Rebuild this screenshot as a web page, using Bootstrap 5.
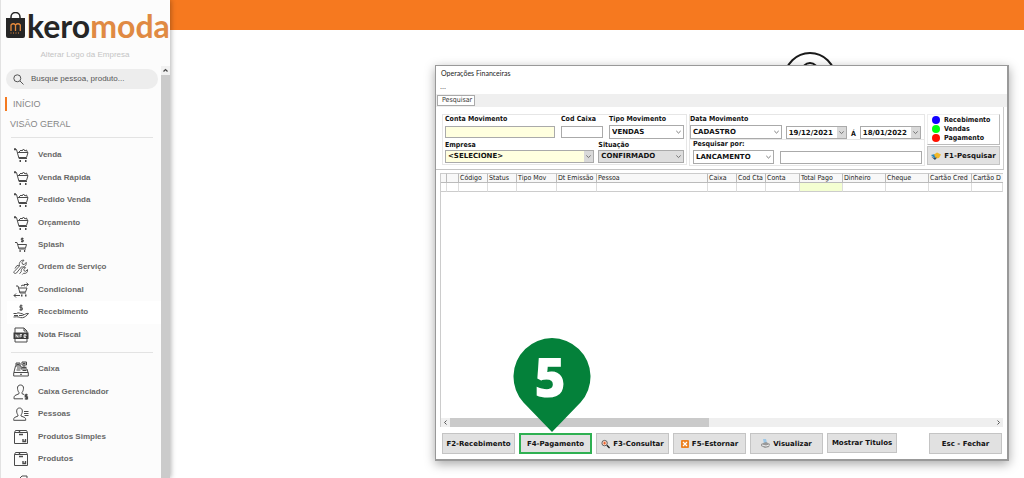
<!DOCTYPE html>
<html lang="pt-BR">
<head>
<meta charset="utf-8">
<meta name="viewport" content="width=device-width, initial-scale=1">
<title>Keromoda - Operações Financeiras</title>
<link href="https://cdn.jsdelivr.net/npm/bootstrap@5.3.0/dist/css/bootstrap.min.css" rel="stylesheet">
<style>
  body { font-family: "Liberation Sans", Arial, sans-serif; font-size: 8px; line-height: 10px; background: #fff; }
  svg { display: block; flex: none; }
  /* sidebar */
  .side { width: 170px; background: #fcfcfc; border-left: 1px solid #e2e2e2; box-shadow: 1px 0 5px rgba(0,0,0,.3); z-index: 2; }
  .brand-row { height: 29px; margin-top: 11px; padding-left: 4px; color: #262626; font: 700 32px/29px Lato, sans-serif; text-decoration: none; }
  .brand-row b { color: #e08a43; font-weight: 700; }
  .logo-hint { color: #c4c4c4; margin-top: 10px; font-size: 8px; }
  .search-pill { background: #ededed; border-radius: 10px; height: 20px; margin: 9px 3px 0 5px; padding: 0 7px; gap: 7px; }
  .search-pill input { border: 0; background: none; outline: 0; padding: 0; width: 100%; font-size: 8px; }
  .search-pill input::placeholder { color: #555; opacity: 1; }
  .top-link { color: #868686; font-size: 9px; line-height: 14px; text-decoration: none; display: block; padding-left: 9px; }
  .top-link.current { border-left: 2px solid #f47a20; margin-left: 4px; padding-left: 6px; }
  .rule { height: 1px; background: #e3e3e3; margin: 0 8px 0 10px; }
  .menu-group a { flex: 1; gap: 9px; padding-left: 6px; margin-left: 6px; color: #686868; font-weight: 700; text-decoration: none; }
  .menu-group a.selected { background: #fff; }
  .ico { width: 16px; height: 16px; fill: none; stroke: #4a4a4a; stroke-width: 1; }
  .vbar { width: 9px; margin-top: 66px; background: #cbcbcb; }
  .vbar span { height: 9px; background: #f1f1f1; }
  /* main */
  .topbar { height: 30px; background: #f6791f; }
  .person { position: absolute; top: 52px; right: 188px; }
  .win { width: 67.2%; min-width: 574px; margin: 35px 15px 0 auto; background: #fff; border: 1px solid #999; border-right-width: 2px; border-bottom-width: 2px;
    box-shadow: 0 3px 10px rgba(0,0,0,.35); font-family: "DejaVu Sans Condensed", "DejaVu Sans", sans-serif; font-size: 7px; line-height: 9px; color: #222; position: relative; }
  .win-title { font-family: Lato, "Open Sans", sans-serif; padding: 2px 5px 0; line-height: 10px; height: 18px; }
  .win-menu { padding: 0 4px; height: 10px; line-height: 7px; }
  .tabs { background: #efefef; height: 13px; padding: 1px 1px 0; }
  .tabs button { border: 1px solid #aaa; background: #fff; padding: 0 0 0 4px; width: 38px; height: 11px; line-height: 9px; text-align: left; color: #333; }
  .filters { height: 63px; padding: 7px 3px 4px 6px; gap: 2px; margin: 0 3px 0 0; border-right: 1px solid #ccc; border-bottom: 1px solid #c4c4c4; color: #111; font-weight: 700; }
  .box { border: 1px solid #e6e6e6; }
  .fld { display: flex; flex-direction: column; min-width: 0; }
  .fld label { line-height: 9px; white-space: nowrap; }
  .win input, .win select, .pick { border: 1px solid #aaa; border-radius: 0; background: #fff; height: 13px; width: 100%; padding: 0 2px; font: 700 7px/11px "DejaVu Sans", sans-serif; color: #111; outline: 0; }
  .pick { display: flex; position: relative; padding: 0; }
  .pick select, .pick input { border: 0; height: 100%; background: none; appearance: none; padding: 0 10px 0 2px; min-width: 0; }
  .pick svg { position: absolute; right: 0; top: 0; width: 9px; height: 100%; padding: 1px; fill: none; stroke: #666; pointer-events: none; }
  .pick.drop svg { background: #d9d9d9; }
  .win .cream { background: #ffffdf; }
  .win .short { height: 12px; margin-top: 2px; }
  .win .tall { height: 14px; margin-top: 1px; }
  .grayed { background: #dedede; }
  .legend-box { height: 31px; border: 1px solid #eee; border-right: 1px solid #bbb; border-bottom: 1px solid #bbb; padding: 1px 0 0 4px; }
  .legend-box i { width: 8px; height: 8px; border-radius: 50%; }
  .key { height: 21px; border: 1px solid #c4c4c4; background: #e1e1e1; color: #111; padding: 0; gap: 3px; font: 700 7px/10px "DejaVu Sans", sans-serif; display: flex; align-items: center; justify-content: center; white-space: nowrap; width: 73px; min-width: 0; }
  .key.marked { border: 2px solid #2fb052; }
  /* data grid */
  .gridwrap { margin: 3px 4px 0; height: 254px; border-left: 1px solid #ccc; }
  .gridwrap table { table-layout: fixed; width: 100%; border-collapse: separate; border-spacing: 0; }
  .gridwrap th { height: 10px; line-height: 8px; font-weight: 400; color: #222; background: #f8f8f8; border-top: 1px solid #ccc; border-bottom: 1px solid #bbb; border-right: 1px solid #bbb; padding: 0 0 0 1px; overflow: hidden; white-space: nowrap; }
  .gridwrap th:last-child { border-right: 0; }
  .gridwrap td { height: 9px; padding: 0; border-right: 1px solid #ddd; border-bottom: 1px solid #ccc; }
  .gridwrap td.paid { background: #f4ffd2; }
  .hbar { height: 9px; background: #efefef; }
  .hbar svg { width: 9px; height: 9px; fill: none; stroke: #555; padding: 2px; }
  .hbar .thumb { width: 46%; background: #cacaca; }
  .keys { padding: 6px 5px 5px 6px; gap: 4px; }
  .pin { position: absolute; left: 77px; top: 272px; }
</style>
</head>
<body>
<svg width="0" height="0" class="position-absolute" aria-hidden="true">
  <symbol id="cart" viewBox="0 0 16 16"><path d="M1 2.500h2.500l2.500 9h8M4.500 5.500h10.500l-1.500 5H6M6 5l2-2 1 1 1.500-2 1.500 2 1.500-1 1 2.500" /><path d="M1 2.200h2M6.500 14h1.500M12 14h1.500" stroke-width="2"/></symbol>
  <symbol id="splash" viewBox="0 0 16 16"><path d="M2 5.500h2l2 6.500h7M5 7.500h8.500l-1 3.500H6M10.500 1.500H8.300v1.500h2v1.500H8M9.200.5v5"/><path d="M6.500 14h1.200M11 14h1.200" stroke-width="2"/></symbol>
  <symbol id="tools" viewBox="0 0 16 16" ><path stroke-width=".9" d="M1.200 12.500 6.500 7C5.500 3.500 8 .8 11 1.200L9 3.500l.5 1.700 1.700.4 2-2.200c.6 3-1.700 5.100-4.700 4.400L3.500 14c-1.500 1.200-3.500-.2-2.300-1.500zM6.500 14.800l1.800-2.200c-.5-2.800 2-4.800 4.200-4l-1.700 2 .5 1.400 1.400.3 1.800-1.800c.6 2.500-1.300 4.500-4 3.800l-1.200 1.200M2 9.500 4 6.500l2 .3"/></symbol>
  <symbol id="cond" viewBox="0 0 16 16"><path d="M3 4h2l2 7h6M5.500 6H14l-1.500 4H6.500M8 4l2-1 2 1M11 2.500h4M13.500.8l2 1.700-2 1.700M1 13.500h6M3 11.500l-2 2 2 2"/><path d="M8 13.500h1.500M12 13.500h1.500" stroke-width="2"/></symbol>
  <symbol id="hand" viewBox="0 0 16 16"><path d="M9.500 1.800H7v2h2.300v2H6.500M8 .5v6.500M.5 9.500h3c2-1.500 3 0 6 .3 1.500.2 1 1.700-.5 1.700H6M10 11c2-.5 3.500-2 5.500-1.500-1.500 2-4 4-6 4.200-3 .2-3.500-1-6-.9L.5 13M1 11.500h4"/></symbol>
  <symbol id="nfe" viewBox="0 0 16 16"><path d="M2 6V1h9l3 3v2M11 1v3h3M2 12v3h12v-3"/><path d="M.5 5.500h15v6.500H.5z" fill="#3a3a3a" stroke="none"/><path d="M3 10.500v-3l2 3v-3M7 10.500v-3h2M7 9h2M11 9h2V7.700h-2v2.800h2" stroke="#fff" stroke-width=".8"/></symbol>
  <symbol id="register" viewBox="0 0 16 16"><path d="M.7 11.500h14.600V15H.7zM1 11l1.500-6H8v3h6l1 3.500M9 1h4.500v3H9zM11 4v3M3 5V2h4v3M4 7h3M3.500 9h4M9.500 9.500h4M7 13.300h2"/><path d="M3.500 3.500h3M10 2.500h2.500M8.500 6.500h5" stroke-width="1.500"/></symbol>
  <symbol id="manager" viewBox="0 0 16 16"><path d="M7.500 1C3 1 4.500 7 6 8.500v1.200L2 11.500c-1 .8-1 2-1 3.300h9M7.500 1c4.500 0 3 6 1.500 7.500v1.200l2 .8"/><path d="M14.700 10.800h-2.500v2h2.300v2h-2.700M13.300 9.800v6" stroke-width="1.200"/></symbol>
  <symbol id="people" viewBox="0 0 16 16"><path d="M6.500 2C2.500 2 3.500 7.500 5 9v1l-3.500 1.500C.7 12.300.7 13 .7 14.300h12c0-1.800-.2-2.500-1.500-3L8 10V9c1.500-1.500 2.500-7-1.500-7z"/><path d="M11 5.500h4.500M11 7.500h4.500M11.500 9.500h4" stroke-width="1.200"/></symbol>
  <symbol id="boxes" viewBox="0 0 16 16"><path d="M1.500 3.500h13v11h-13zM1.500 3.500l1-2h11l1 2"/><path d="M6 5.500h4M10 10v2.500h2.500V10M6.500 2v2" stroke-width="1.400"/></symbol>
  <symbol id="tag" viewBox="0 0 16 16"><path d="M2 9l7-7h5v5l-7 7zM4 10l6-6"/></symbol>
  <symbol id="down" viewBox="0 0 8 10"><path d="M1.500 3.800 4 6.200l2.500-2.400" /></symbol>
</svg>

<div class="d-flex vh-100 overflow-hidden">
  <nav class="side d-flex flex-shrink-0 overflow-hidden">
    <div class="flex-grow-1 position-relative" style="min-width:0">
      <a href="#" class="brand-row d-flex align-items-center">
        <svg width="22" height="28" viewBox="0 0 22 28"><path d="M1 6h19v18a2 2 0 0 1-2 2H3a2 2 0 0 1-2-2z" fill="#262626"/><path d="M6 8V5a4.500 4.500 0 0 1 9 0v3" fill="none" stroke="#262626" stroke-width="1.500"/><path d="M6 19v-6q2.300-2.500 4.500 0v6m0-6q2.500-2.500 4.800 0v6" fill="none" stroke="#e58a3c" stroke-width="1.300"/><path d="M5.500 21h10" stroke="#e58a3c" stroke-dasharray="1 1.500"/></svg>
        <span>kero<b>moda</b></span>
      </a>
      <div class="logo-hint text-center ps-2">Alterar Logo da Empresa</div>
      <div class="search-pill d-flex align-items-center">
        <svg width="11" height="11" viewBox="0 0 11 11" fill="none" stroke="#555"><circle cx="4.300" cy="4.300" r="3.500"/><path d="M7 7l3.500 3.500"/></svg>
        <input type="text" aria-label="Busca" placeholder="Busque pessoa, produto...">
      </div>
      <a href="#" class="top-link current mt-2">INÍCIO</a>
      <a href="#" class="top-link" style="margin-top:6px">VISÃO GERAL</a>
      <div class="rule" style="margin-top:6px"></div>
      <div class="menu-group d-flex flex-column" style="height:202px;margin-top:6px">
        <a href="#" class="d-flex align-items-center"><svg class="ico"><use href="#cart"/></svg>Venda</a>
        <a href="#" class="d-flex align-items-center"><svg class="ico"><use href="#cart"/></svg>Venda Rápida</a>
        <a href="#" class="d-flex align-items-center"><svg class="ico"><use href="#cart"/></svg>Pedido Venda</a>
        <a href="#" class="d-flex align-items-center"><svg class="ico"><use href="#cart"/></svg>Orçamento</a>
        <a href="#" class="d-flex align-items-center"><svg class="ico"><use href="#splash"/></svg>Splash</a>
        <a href="#" class="d-flex align-items-center"><svg class="ico"><use href="#tools"/></svg>Ordem de Serviço</a>
        <a href="#" class="d-flex align-items-center"><svg class="ico"><use href="#cond"/></svg>Condicional</a>
        <a href="#" class="d-flex align-items-center selected"><svg class="ico"><use href="#hand"/></svg>Recebimento</a>
        <a href="#" class="d-flex align-items-center"><svg class="ico"><use href="#nfe"/></svg>Nota Fiscal</a>
      </div>
      <div class="rule" style="margin-top:6px"></div>
      <div class="menu-group d-flex flex-column" style="height:135px;margin-top:5px">
        <a href="#" class="d-flex align-items-center"><svg class="ico"><use href="#register"/></svg>Caixa</a>
        <a href="#" class="d-flex align-items-center"><svg class="ico"><use href="#manager"/></svg>Caixa Gerenciador</a>
        <a href="#" class="d-flex align-items-center"><svg class="ico"><use href="#people"/></svg>Pessoas</a>
        <a href="#" class="d-flex align-items-center"><svg class="ico"><use href="#boxes"/></svg>Produtos Simples</a>
        <a href="#" class="d-flex align-items-center"><svg class="ico"><use href="#boxes"/></svg>Produtos</a>
        <a href="#" class="d-flex align-items-center" aria-label="Etiquetas"><svg class="ico"><use href="#tag"/></svg></a>
      </div>
    </div>
    <div class="vbar flex-shrink-0"><span class="d-block"><svg width="9" height="9" viewBox="0 0 9 9" fill="none" stroke="#444" stroke-width="1.200"><path d="M2.500 5.500l2-2 2 2"/></svg></span></div>
  </nav>

  <main class="flex-grow-1 position-relative">
    <div class="topbar"></div>
    <svg class="person" width="52" height="52" viewBox="0 0 52 52" fill="none" stroke="#1a1a1a" stroke-width="2"><circle cx="26" cy="26" r="25"/><circle cx="26" cy="19" r="8"/></svg>
    <section class="win">
      <div class="win-title">Operações Financeiras</div>
      <div class="win-menu">...</div>
      <div class="tabs"><button type="button">Pesquisar</button></div>

      <form class="filters d-flex">
        <div class="box d-flex flex-column justify-content-between" style="flex:245 1 0;padding-bottom:1px">
          <div class="d-flex" style="gap:6px;padding:0 2px">
            <div class="fld" style="flex:110 1 0"><label for="conta">Conta Movimento</label><input id="conta" class="cream short"></div>
            <div class="fld" style="flex:42 1 0"><label for="caixa">Cod Caixa</label><input id="caixa" class="short"></div>
            <div class="fld" style="flex:75 1 0"><label for="tipo">Tipo Movimento</label><div class="pick tall"><select id="tipo"><option>VENDAS</option></select><svg viewBox="0 0 8 10"><use href="#down"/></svg></div></div>
          </div>
          <div class="d-flex gap-1" style="padding:0 2px">
            <div class="fld" style="flex:150 1 0"><label for="empresa">Empresa</label><div class="pick cream drop"><select id="empresa"><option>&lt;SELECIONE&gt;</option></select><svg viewBox="0 0 8 10"><use href="#down"/></svg></div></div>
            <div class="fld" style="flex:86 1 0"><label for="situacao">Situação</label><div class="pick grayed"><select id="situacao"><option>CONFIRMADO</option></select><svg viewBox="0 0 8 10"><use href="#down"/></svg></div></div>
          </div>
        </div>
        <div class="d-flex flex-column justify-content-between" style="flex:238 1 0;min-width:0">
          <div class="box d-flex align-items-end" style="gap:4px;padding:0 3px 0 0;height:26px">
            <div class="fld" style="flex:96 1 0"><label for="data">Data Movimento</label><div class="pick tall"><select id="data"><option>CADASTRO</option></select><svg viewBox="0 0 8 10"><use href="#down"/></svg></div></div>
            <div class="pick drop" style="flex:62 1 0"><input aria-label="Data inicial" value="19/12/2021"><svg viewBox="0 0 8 10"><use href="#down"/></svg></div>
            <span>Á</span>
            <div class="pick drop" style="flex:62 1 0"><input aria-label="Data final" value="18/01/2022"><svg viewBox="0 0 8 10"><use href="#down"/></svg></div>
          </div>
          <div class="box d-flex align-items-end" style="gap:6px;padding:0 2px 1px 3px;height:26px;border-top:0">
            <div class="fld" style="flex:81 1 0"><label for="por">Pesquisar por:</label><div class="pick tall"><select id="por"><option>LANCAMENTO</option></select><svg viewBox="0 0 8 10"><use href="#down"/></svg></div></div>
            <div style="flex:143 1 0"><input class="d-block" aria-label="Texto da pesquisa"></div>
          </div>
        </div>
        <div class="flex-shrink-0 d-flex flex-column justify-content-between">
          <div class="legend-box">
            <div class="d-flex gap-1"><i style="background:#10f"></i>Recebimento</div>
            <div class="d-flex gap-1"><i style="background:#0f1"></i>Vendas</div>
            <div class="d-flex gap-1"><i style="background:#f10"></i>Pagamento</div>
          </div>
          <button type="button" class="key" style="height:19px"><svg width="10" height="8" viewBox="0 0 10 8"><path d="M0 3l4-1 3 2-3 3z" fill="#2a88c0"/><path d="M3 2.500 6 .500l4 2-2 3.500-3 .5z" fill="#f2b82a"/><path d="M0 4.500l3 1.500 3-.5L4 8z" fill="#354a60"/></svg>F1-Pesquisar</button>
        </div>
      </form>

      <div class="gridwrap d-flex flex-column justify-content-between">
        <table>
          <colgroup><col style="width:6px"><col style="width:12px"><col style="width:29px"><col style="width:29px"><col style="width:40px"><col style="width:40px"><col><col style="width:29px"><col style="width:29px"><col style="width:34px"><col style="width:43px"><col style="width:43px"><col style="width:43px"><col style="width:43px"><col style="width:31px"></colgroup>
          <thead><tr><th></th><th></th><th>Código</th><th>Status</th><th>Tipo Mov</th><th>Dt Emissão</th><th>Pessoa</th><th>Caixa</th><th>Cod Cta</th><th>Conta</th><th>Total Pago</th><th>Dinheiro</th><th>Cheque</th><th>Cartão Cred</th><th>Cartão D</th></tr></thead>
          <tbody><tr><td></td><td></td><td></td><td></td><td></td><td></td><td></td><td></td><td></td><td></td><td class="paid"></td><td></td><td></td><td></td><td></td></tr></tbody>
        </table>
        <div class="hbar d-flex"><svg viewBox="0 0 5 5"><path d="M3.500.5l-2 2 2 2"/></svg><div class="thumb"></div><svg class="ms-auto" viewBox="0 0 5 5"><path d="M1.500.5l2 2-2 2"/></svg></div>
      </div>

      <div class="keys d-flex">
        <button type="button" class="key">F2-Recebimento</button>
        <button type="button" class="key marked">F4-Pagamento</button>
        <button type="button" class="key"><svg width="9" height="10" viewBox="0 0 10 10" fill="none"><circle cx="4" cy="4" r="3" fill="#ffd9c8" stroke="#555"/><path d="M6.500 6.500l3 3" stroke="#222" stroke-width="1.500"/><path d="M2.500 4h3M4 2.500v3" stroke="#e4521b"/></svg>F3-Consultar</button>
        <button type="button" class="key"><svg width="8" height="8" viewBox="0 0 8 8"><rect width="8" height="8" rx="1" fill="#ec8221"/><path d="M2 2l4 4M6 2L2 6" stroke="#fff" stroke-width="1.200"/></svg>F5-Estornar</button>
        <button type="button" class="key"><svg width="9" height="9" viewBox="0 0 9 9"><path d="M2 0l3 0 1 4-3 1z" fill="#9cc8e8"/><path d="M0 5l5-2 4 2-1 3-4 1-4-2z" fill="#999"/><path d="M1 6l4 1 3-1" fill="none" stroke="#eee"/></svg>Visualizar</button>
        <button type="button" class="key" style="height:20px;width:70px">Mostrar Titulos</button>
        <button type="button" class="key ms-auto">Esc - Fechar</button>
      </div>

      <svg class="pin" width="78" height="94" viewBox="0 0 78 94"><path d="M39 94L10.500 64.500A38.500 38.500 0 1 1 67.500 64.500z" fill="#04813a"/><text x="37" y="59" text-anchor="middle" font-family="Open Sans, sans-serif" font-weight="800" font-size="54" fill="#fff">5</text></svg>
    </section>
  </main>
</div>
<script src="https://cdn.jsdelivr.net/npm/bootstrap@5.3.0/dist/js/bootstrap.bundle.min.js"></script>
</body>
</html>
